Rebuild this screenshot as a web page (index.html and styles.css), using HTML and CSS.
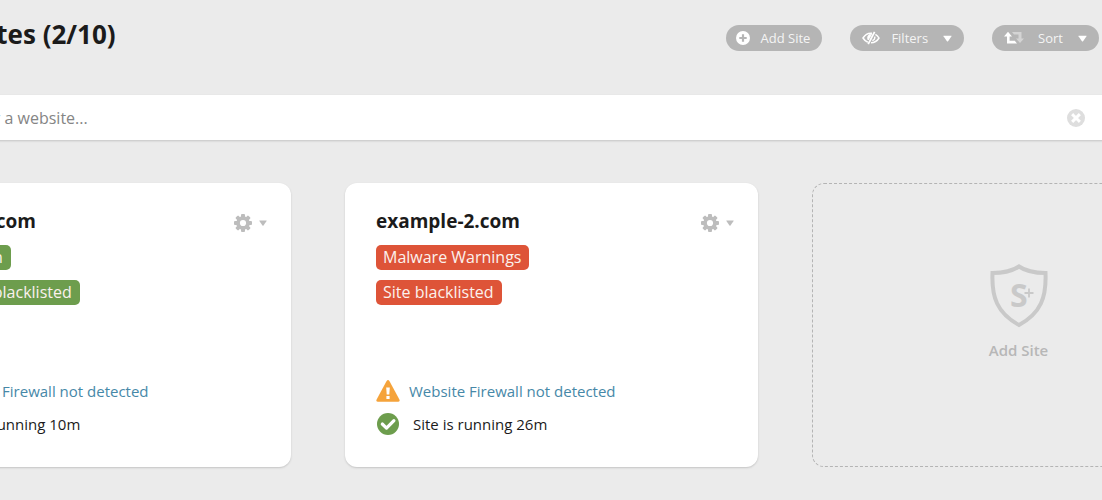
FILE: index.html
```
<!DOCTYPE html>
<html lang="en">
<head>
<meta charset="utf-8">
<title>My Sites</title>
<link rel="stylesheet" href="styles.css">
</head>
<body>
<svg class="symbols" aria-hidden="true">
  <symbol id="gear" viewBox="0 0 18 18">
    <g fill="currentColor">
      <rect x="7" y="0" width="4" height="18" rx="1"/>
      <rect x="7" y="0" width="4" height="18" rx="1" transform="rotate(45 9 9)"/>
      <rect x="7" y="0" width="4" height="18" rx="1" transform="rotate(90 9 9)"/>
      <rect x="7" y="0" width="4" height="18" rx="1" transform="rotate(135 9 9)"/>
      <circle cx="9" cy="9" r="6.8"/>
    </g>
    <circle cx="9" cy="9" r="3.1" fill="#fff"/>
  </symbol>
  <symbol id="caret" viewBox="0 0 8 6"><path d="M.6.5h6.8q.6 0 .2.6L4.5 5.4q-.5.5-1 0L.4 1.1Q0 .5.6.5z" fill="currentColor"/></symbol>
  <symbol id="warning" viewBox="0 0 24 22">
    <path d="M10.6 1q1.4-1.8 2.8 0l10 18.6q.8 2.1-1.4 2.2H2q-2.200-.1-1.400-2.200z" fill="#f5a33b"/>
    <path d="M10.200 7.500h3.600l-.5 7h-2.600zM10.400 15.900h3.200v3h-3.200z" fill="#fff"/>
  </symbol>
  <symbol id="check" viewBox="0 0 22 22">
    <circle cx="11" cy="11" r="11" fill="#6d9d4d"/>
    <path d="M5.300 11l4.200 4.100 7.400-7.500" fill="none" stroke="#fff" stroke-width="3.200" stroke-linecap="round" stroke-linejoin="round"/>
  </symbol>
</svg>
<main class="page">
  <header class="header">
    <h1 class="title">My Sites (2/10)</h1>
    <div class="actions">
      <button class="pill" type="button">
        <svg class="pill-icon plus" viewBox="0 0 14 14"><circle cx="7" cy="7" r="7" fill="#fff"/><path d="M7 3.300v7.400M3.300 7h7.400" stroke="#b5b5b5" stroke-width="2.200"/></svg>
        <span>Add Site</span>
      </button>
      <button class="pill" type="button">
        <svg class="pill-icon eye" viewBox="0 0 18 14" fill="none" stroke="#fff"><path d="M10 2.200C5.800 1.800 2.700 4.200 1 7c1.200 2 2.700 3.400 4.800 4.200M13.400 3.300c1.500.9 2.700 2.100 3.600 3.700-1.700 2.800-4.500 4.800-8 4.800" stroke-width="1.500"/><path d="M9.500 3.200C6 3.200 5 6 6.200 9z" fill="#fff" stroke-width="1"/><path d="M12.600.8L6.200 13.200" stroke-width="1.800"/><path d="M12.900 5.500c.2 2-.9 3.500-2.600 4.200" stroke-width="1.300"/></svg>
        <span>Filters</span>
        <svg class="pill-caret"><use href="#caret"/></svg>
      </button>
      <button class="pill" type="button">
        <svg class="pill-icon arrows" viewBox="0 0 20 14"><path d="M8 1h9.500v6.500H20L16 12l-4-4.500h2.500V3.500H10z" fill="#d4d4d4"/><path d="M4 .8L8 5.500H5.600v4.300h5.200l2.200 2.600H3V5.500H0z" fill="#fff"/></svg>
        <span>Sort</span>
        <svg class="pill-caret"><use href="#caret"/></svg>
      </button>
    </div>
  </header>
  <form class="search">
    <input class="search-input" type="text" aria-label="Search for a website" placeholder="Search for a website...">
    <button class="clear" type="reset" aria-label="Clear search">
      <svg class="clear-icon" viewBox="0 0 18 18"><circle cx="9" cy="9" r="9" fill="#dedede"/><path d="M6.200 6.200l5.600 5.600M11.800 6.200l-5.600 5.600" stroke="#fff" stroke-width="3" stroke-linecap="square"/></svg>
    </button>
  </form>
  <section class="grid">
    <article class="card">
      <div class="card-head">
        <h2 class="name">example.com</h2>
        <button class="settings" type="button" aria-label="Settings for example.com"><svg class="gear"><use href="#gear"/></svg><svg class="caret"><use href="#caret"/></svg></button>
      </div>
      <div class="badges"><span class="badge good">Site is clean</span><span class="badge good">Site is not blacklisted</span></div>
      <div class="status"><svg class="status-icon warn"><use href="#warning"/></svg><a class="link" href="#firewall">Website Firewall not detected</a></div>
      <div class="status running"><svg class="status-icon ok"><use href="#check"/></svg><span>Site is running 10m</span></div>
    </article>
    <article class="card">
      <div class="card-head">
        <h2 class="name">example-2.com</h2>
        <button class="settings" type="button" aria-label="Settings for example-2.com"><svg class="gear"><use href="#gear"/></svg><svg class="caret"><use href="#caret"/></svg></button>
      </div>
      <div class="badges"><span class="badge bad">Malware Warnings</span><span class="badge bad">Site blacklisted</span></div>
      <div class="status"><svg class="status-icon warn"><use href="#warning"/></svg><a class="link" href="#firewall">Website Firewall not detected</a></div>
      <div class="status running"><svg class="status-icon ok"><use href="#check"/></svg><span>Site is running 26m</span></div>
    </article>
    <button class="add-card" type="button">
      <svg class="shield" viewBox="0 0 58 64">
        <path d="M29 2.500C22.500 7 13 9 2.500 9c-1 24 4.500 40 26.500 52C51 49 56.500 33 55.500 9 45 9 35.500 7 29 2.500z" fill="none" stroke="#c9c9c9" stroke-width="4"/>
        <text class="shield-letter" x="20" y="43">S</text>
        <path d="M39 24.500v9M34.500 29h9" stroke="#c9c9c9" stroke-width="1.800"/>
      </svg>
      <span>Add Site</span>
    </button>
  </section>
</main>
</body>
</html>
```
FILE: styles.css
```
* { box-sizing: border-box; }

body {
  margin: 0;
  background: #ebebeb;
  color: #1b1b1b;
  font-family: "Open Sans", "Noto Sans", sans-serif;
  overflow: hidden;
}

button {
  border: 0;
  padding: 0;
  background: none;
  font: inherit;
  cursor: pointer;
}

.symbols { display: none; }

.page { margin: 0 -123px 0 -122px; }

.header {
  display: flex;
  justify-content: space-between;
  align-items: flex-start;
  padding: 18px 126px 0 50px;
  height: 95px;
}

.title {
  margin: 0;
  font-size: 26px;
  line-height: 32px;
  font-weight: 700;
}

.actions {
  display: flex;
  gap: 28px;
  padding-top: 7px;
}

.pill {
  display: flex;
  align-items: center;
  height: 26px;
  padding: 0 12px 0 10px;
  border-radius: 13px;
  background: #b5b5b5;
  color: #f4f4f4;
  font-size: 13px;
}

.pill-icon { height: 14px; margin-right: 11px; }
.plus { width: 14px; }
.eye { width: 18px; margin-left: 2px; }
.arrows { width: 20px; margin-left: 2px; margin-right: 14px; }
.pill-caret { width: 9px; height: 7px; margin-left: 15px; color: #fff; }

.search {
  display: flex;
  align-items: center;
  height: 45px;
  padding: 0 140px 0 46px;
  background: #fff;
  box-shadow: 0 1px 2px #c4c4c4;
}

.search-input {
  flex: 1;
  min-width: 0;
  padding: 0;
  border: 0;
  outline: 0;
  background: none;
  color: #333;
  font: 16px "Open Sans", "Noto Sans", sans-serif;
}

.search-input::placeholder { color: #858585; opacity: 1; }
.clear-icon { display: block; width: 18px; height: 18px; }

.grid {
  display: grid;
  grid-template-columns: repeat(3, minmax(0, 1fr));
  gap: 54px;
  padding: 43px 0 33px;
}

.card {
  padding: 24px 24px 31px 31px;
  border-radius: 12px;
  background: #fff;
  box-shadow: 0 1px 2px #c4c4c4;
}

.card-head {
  display: flex;
  justify-content: space-between;
  align-items: center;
}

.name {
  margin: 0;
  font-size: 19px;
  line-height: 28px;
  font-weight: 700;
}

.settings {
  display: flex;
  align-items: center;
  gap: 7px;
  padding-top: 4px;
  color: #bdbdbd;
}

.gear { width: 18px; height: 18px; }
.caret { width: 8px; height: 6px; }

.badges {
  display: flex;
  flex-direction: column;
  align-items: flex-start;
  gap: 10px;
  margin: 10px 0 74px;
}

.badge {
  padding: 0 8px 0 7px;
  border-radius: 5px;
  color: #fbf1ed;
  font-size: 16px;
  line-height: 25px;
}

.good { background: #6d9d4d; }
.bad { background: #de5438; }

.status {
  display: flex;
  align-items: center;
  height: 24px;
  font-size: 15px;
}

.status-icon { width: 24px; margin-right: 9px; }
.warn { height: 22px; }
.ok { height: 22px; margin-right: 13px; }
.running { margin-top: 9px; }
.link { color: #4688a8; text-decoration: none; }

.add-card {
  display: flex;
  flex-direction: column;
  align-items: center;
  justify-content: center;
  gap: 12px;
  padding-bottom: 26px;
  border: 1px dashed #b4b4b4;
  border-radius: 12px;
  color: #b7b7b7;
  font-size: 15px;
  font-weight: 600;
}

.shield { width: 58px; height: 64px; }
.shield-letter { font-size: 32px; font-weight: 700; fill: #c9c9c9; }
```
